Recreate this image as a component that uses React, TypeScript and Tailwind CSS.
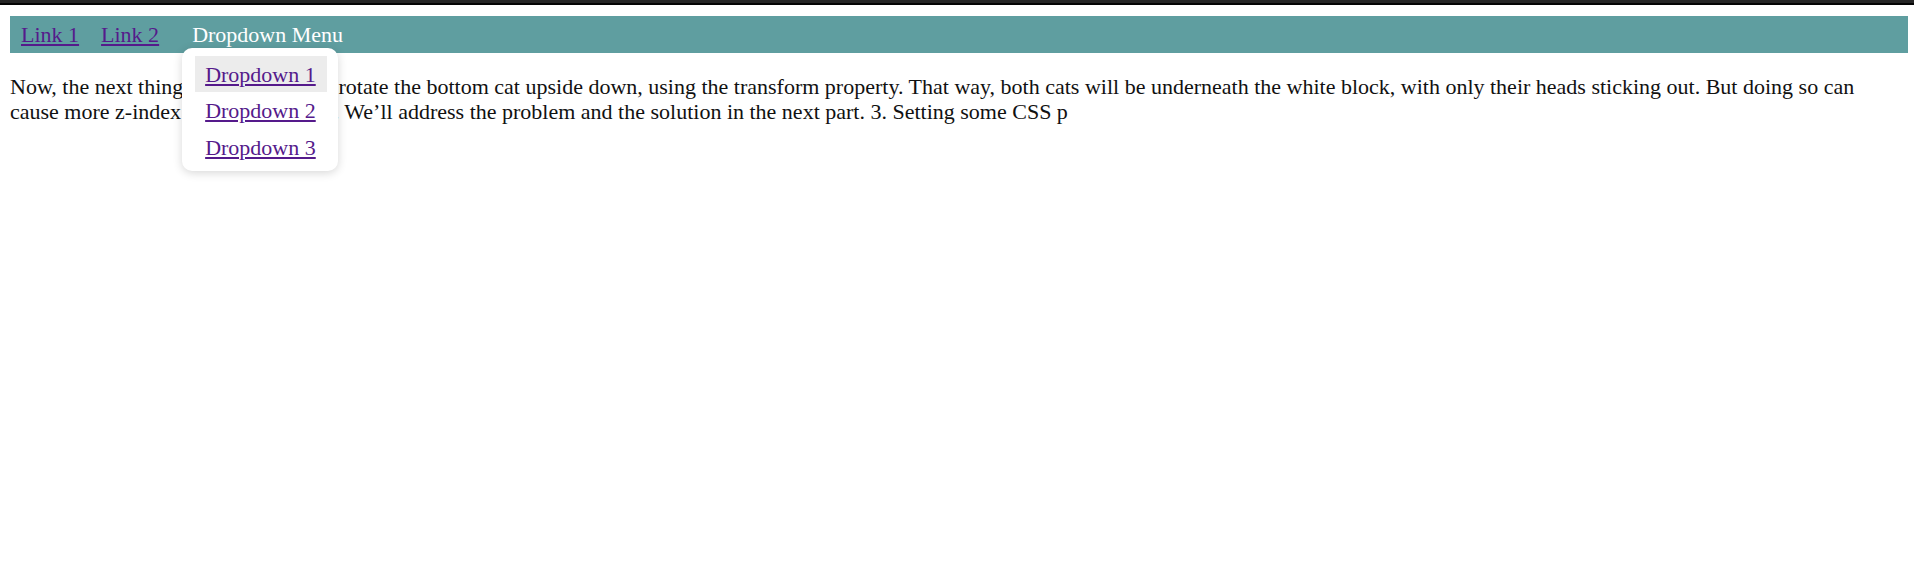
import React from "react";

const items = ["Dropdown 1", "Dropdown 2", "Dropdown 3"];

const App: React.FC = () => {
  return (
    <div className="min-h-[566px] bg-white text-[22px] leading-[1.15] text-[#111] font-['Liberation_Serif',serif]">
      {/* top frame line */}
      <div className="h-[3px] bg-[#262626]" />
      <div className="h-[2px] bg-[#050505]" />

      {/* nav */}
      <nav className="mt-[11px] ml-[10px] mr-[6px] h-[37px] bg-[#5f9ea0] flex items-center whitespace-nowrap">
        <a href="#" className="px-[11px] text-[#551a8b] underline">
          Link 1
        </a>
        <a href="#" className="px-[11px] text-[#551a8b] underline">
          Link 2
        </a>
        <div className="relative h-full flex items-center px-[22px] text-white">
          <span>Dropdown Menu</span>
          <div className="absolute left-[12px] top-[32px] z-10 w-[156px] rounded-[10px] bg-white pt-[8px] pl-[13px] pr-[11px] pb-[6px] shadow-[0_2px_10px_rgba(0,0,0,0.16)]">
            {items.map((item, i) => (
              <a
                key={item}
                href="#"
                className={
                  i === 0
                    ? "block whitespace-nowrap px-[10px] pt-[6px] pb-[5px] bg-[#ececec] text-[#551a8b] underline"
                    : "block whitespace-nowrap px-[10px] pt-[6px] pb-[5px] text-[#551a8b] underline"
                }
              >
                {item}
              </a>
            ))}
          </div>
        </div>
      </nav>

      {/* content */}
      <p className="mt-[21px] ml-[10px] mr-[6px]">
        Now, the next thing we want to do is rotate the bottom cat upside down, using the transform property.
        That way, both cats will be underneath the white block, with only their heads sticking out. But doing
        so can cause more z-index related problems. We’ll address the problem and the solution in the next part.
        3. Setting some CSS p
      </p>
    </div>
  );
};

export default App;
